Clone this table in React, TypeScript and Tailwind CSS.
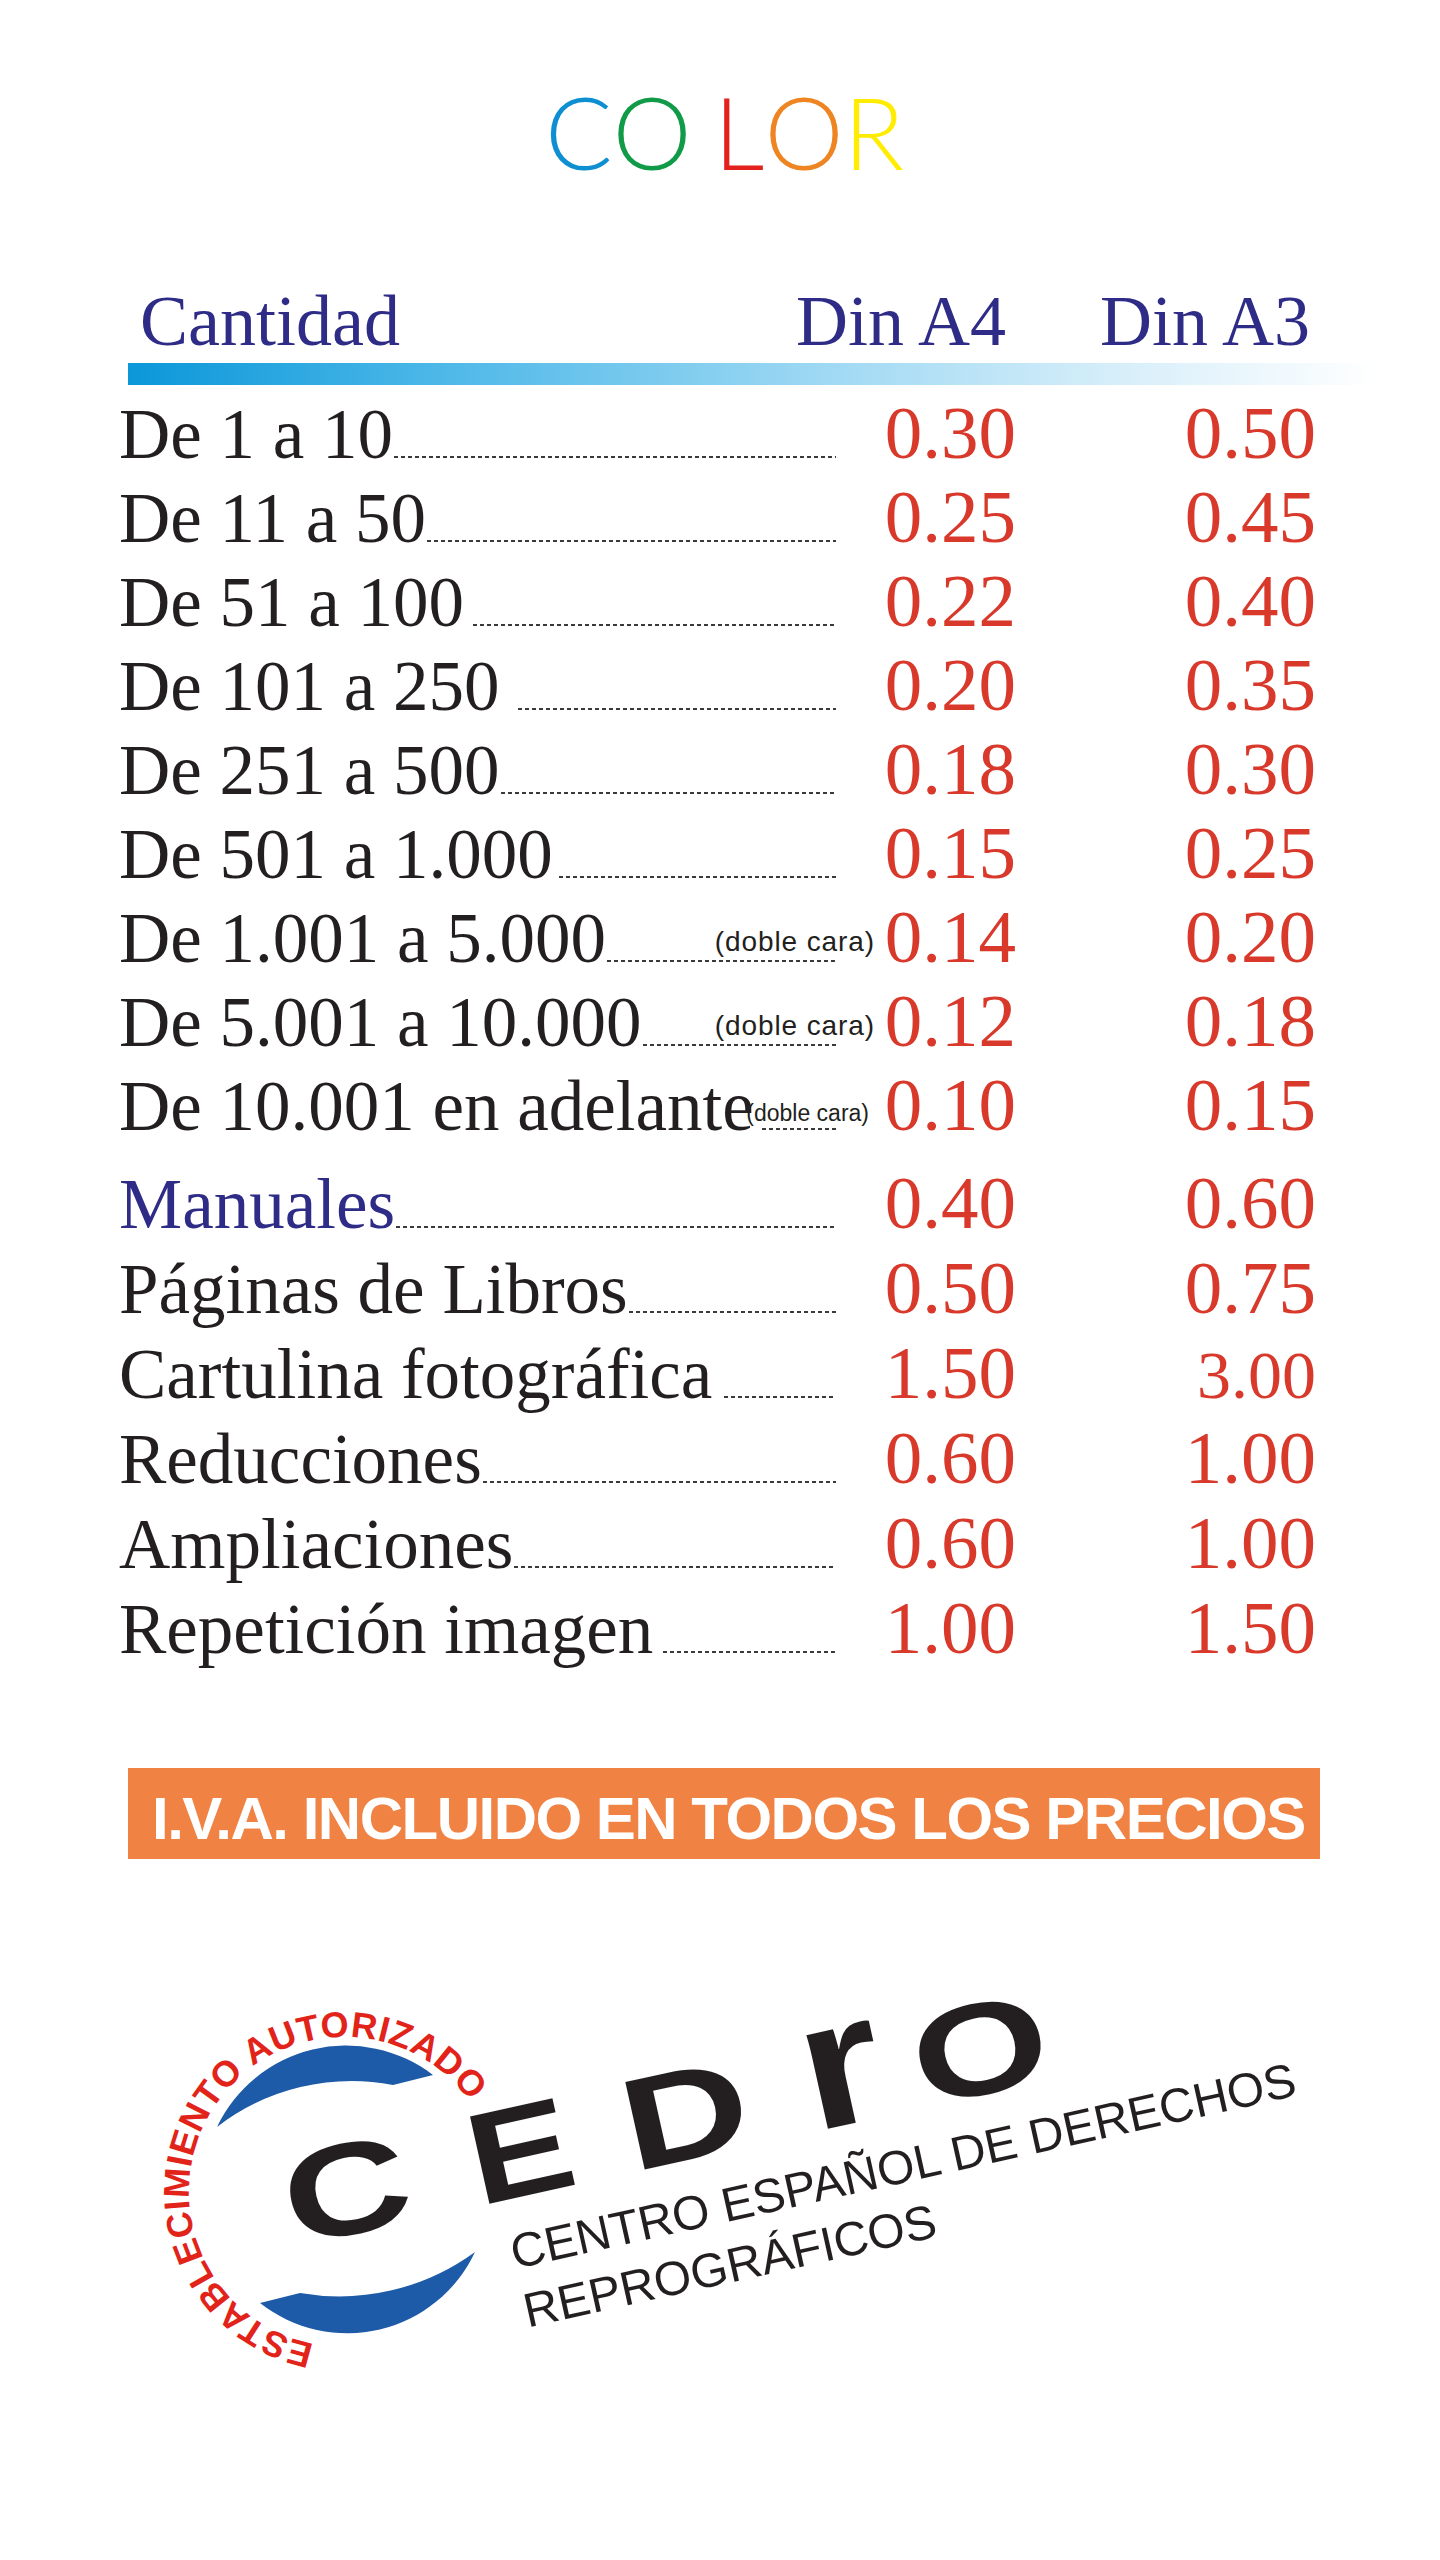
import React from "react";

type Row = {
  label: string;
  a4: string;
  a3: string;
  gapClass: string;
  doble?: "lg" | "sm";
  blue?: boolean;
  a3Class?: string;
};

const group1: Row[] = [
  { label: "De 1 a 10", a4: "0.30", a3: "0.50", gapClass: "ml-[1px]" },
  { label: "De 11 a 50", a4: "0.25", a3: "0.45", gapClass: "ml-[1px]" },
  { label: "De 51 a 100", a4: "0.22", a3: "0.40", gapClass: "ml-[9px]" },
  { label: "De 101 a 250", a4: "0.20", a3: "0.35", gapClass: "ml-[18px]" },
  { label: "De 251 a 500", a4: "0.18", a3: "0.30", gapClass: "ml-[1px]" },
  { label: "De 501 a 1.000", a4: "0.15", a3: "0.25", gapClass: "ml-[6px]" },
  { label: "De 1.001 a 5.000", a4: "0.14", a3: "0.20", gapClass: "ml-[1px]", doble: "lg" },
  { label: "De 5.001 a 10.000", a4: "0.12", a3: "0.18", gapClass: "ml-[1px]", doble: "lg" },
  { label: "De 10.001 en adelante", a4: "0.10", a3: "0.15", gapClass: "ml-[8px]", doble: "sm" },
];

const group2: Row[] = [
  { label: "Manuales", a4: "0.40", a3: "0.60", gapClass: "ml-[1px]", blue: true },
  { label: "Páginas de Libros", a4: "0.50", a3: "0.75", gapClass: "ml-[1px]" },
  { label: "Cartulina fotográfica", a4: "1.50", a3: "3.00", gapClass: "ml-[12px]", a3Class: "text-[68px]" },
  { label: "Reducciones", a4: "0.60", a3: "1.00", gapClass: "ml-[1px]" },
  { label: "Ampliaciones", a4: "0.60", a3: "1.00", gapClass: "ml-[1px]" },
  { label: "Repetición imagen", a4: "1.00", a3: "1.50", gapClass: "ml-[10px]" },
];

function PriceRow({ r, tall }: { r: Row; tall?: boolean }) {
  return (
    <div className={`flex items-baseline pl-[119px] ${tall ? "h-[85px]" : "h-[84px]"}`}>
      <div className="flex w-[717px] items-baseline">
        <span
          className={`whitespace-nowrap text-[71px] leading-none ${
            r.blue ? "text-[#2e2c86]" : "text-[#231f20]"
          }`}
        >
          {r.label}
        </span>
        <div
          className={`relative h-[2px] flex-1 ${r.gapClass} bg-[repeating-linear-gradient(90deg,#3a3a3a_0px,#3a3a3a_4px,transparent_4px,transparent_7px)]`}
        >
          {r.doble === "lg" && (
            <span className="absolute bottom-[6px] right-[-39px] whitespace-nowrap font-['Liberation_Sans',Arial,sans-serif] text-[28px] leading-none tracking-[0.9px] text-[#231f20]">
              (doble cara)
            </span>
          )}
          {r.doble === "sm" && (
            <span className="absolute bottom-[5px] right-[-33px] whitespace-nowrap font-['Liberation_Sans',Arial,sans-serif] text-[23px] leading-none text-[#231f20]">
              (doble cara)
            </span>
          )}
        </div>
      </div>
      <span className="w-[180px] text-right text-[75px] leading-none text-[#d8392b]">{r.a4}</span>
      <span className={`w-[300px] text-right leading-none text-[#d8392b] ${r.a3Class ?? "text-[75px]"}`}>
        {r.a3}
      </span>
    </div>
  );
}

function CedroLogo() {
  const sans = "Liberation Sans, Arial, sans-serif";
  return (
    <svg width="1440" height="701" viewBox="0 1859 1440 701" className="block">
      <defs>
        <path id="ringPath" d="M 314.4 2344.1 A 155 155 0 1 1 470.2 2102" fill="none" />
      </defs>
      <path d="M 217 2127 A 143 143 0 0 1 433 2075 L 393 2085 A 220 220 0 0 0 217 2127 Z" fill="#1d5aa7" />
      <path d="M 475 2252 A 141 141 0 0 1 260 2303 L 300 2293 A 230 230 0 0 0 475 2252 Z" fill="#1d5aa7" />
      <text fontFamily={sans} fontWeight="700" fontSize="36" fill="#e2231a">
        <textPath href="#ringPath" textLength="604" lengthAdjust="spacing">
          ESTABLECIMIENTO AUTORIZADO
        </textPath>
      </text>
      <g transform="rotate(-12.5 344 2192)" fill="#231f20" fontFamily={sans}>
        <text transform="translate(347 2235) scale(1.35 1)" textAnchor="middle" fontSize="130" fontWeight="700">
          C
        </text>
        <text transform="translate(525 2235) scale(1.2 1)" textAnchor="middle" fontSize="130" fontWeight="700">
          E
        </text>
        <text transform="translate(694 2235) scale(1.35 1)" textAnchor="middle" fontSize="130" fontWeight="700">
          D
        </text>
        <text transform="translate(856 2235) scale(1.6 1.4)" textAnchor="middle" fontSize="130" fontWeight="700">
          r
        </text>
        <text transform="translate(996 2235) scale(1.35 1)" textAnchor="middle" fontSize="130" fontWeight="700">
          O
        </text>
        <text x="494" y="2304" fontSize="48">
          CENTRO ESPAÑOL DE DERECHOS
        </text>
        <text x="494" y="2364" fontSize="48">
          REPROGRÁFICOS
        </text>
      </g>
    </svg>
  );
}

export default function App() {
  return (
    <div className="min-h-[2560px] w-[1440px] bg-white pt-[81px] font-['Liberation_Serif','Times_New_Roman',serif]">
      {/* Title */}
      <div className="flex h-[100px] pl-[545px] font-['Lato',sans-serif] text-[100px] font-light leading-none">
        <span className="text-[#0e8fd2]">C</span>
        <span className="text-[#119a48]">O</span>
        <span className="ml-[22px] text-[#e3211d]">L</span>
        <span className="text-[#ee8522]">O</span>
        <span className="text-[#ffec00]">R</span>
      </div>

      {/* Header */}
      <div className="mt-[104px] flex h-[72px] items-baseline pl-[140px] text-[72px] leading-none text-[#2e2c86]">
        <span className="w-[656px]">Cantidad</span>
        <span className="w-[304px]">Din A4</span>
        <span>Din A3</span>
      </div>

      {/* Gradient bar */}
      <div className="ml-[128px] mt-[6px] h-[22px] w-[1250px] bg-[linear-gradient(90deg,#0b97d9_0%,#4db8e8_25%,#9dd8f3_55%,#d8effa_80%,#ffffff_100%)]" />

      {/* Group 1 */}
      <div className="mt-[10px]">
        {group1.map((r) => (
          <PriceRow key={r.label} r={r} />
        ))}
      </div>

      {/* Group 2 */}
      <div className="mt-[14px]">
        {group2.map((r) => (
          <PriceRow key={r.label} r={r} tall />
        ))}
      </div>

      {/* IVA banner */}
      <div className="ml-[128px] mt-[93px] flex h-[91px] w-[1192px] items-center bg-[#f08243] pl-[24px] pt-[10px]">
        <span className="whitespace-nowrap font-['Liberation_Sans',Arial,sans-serif] text-[60px] font-bold leading-none tracking-[-1.5px] text-white">
          I.V.A. INCLUIDO EN TODOS LOS PRECIOS
        </span>
      </div>

      <CedroLogo />
    </div>
  );
}
